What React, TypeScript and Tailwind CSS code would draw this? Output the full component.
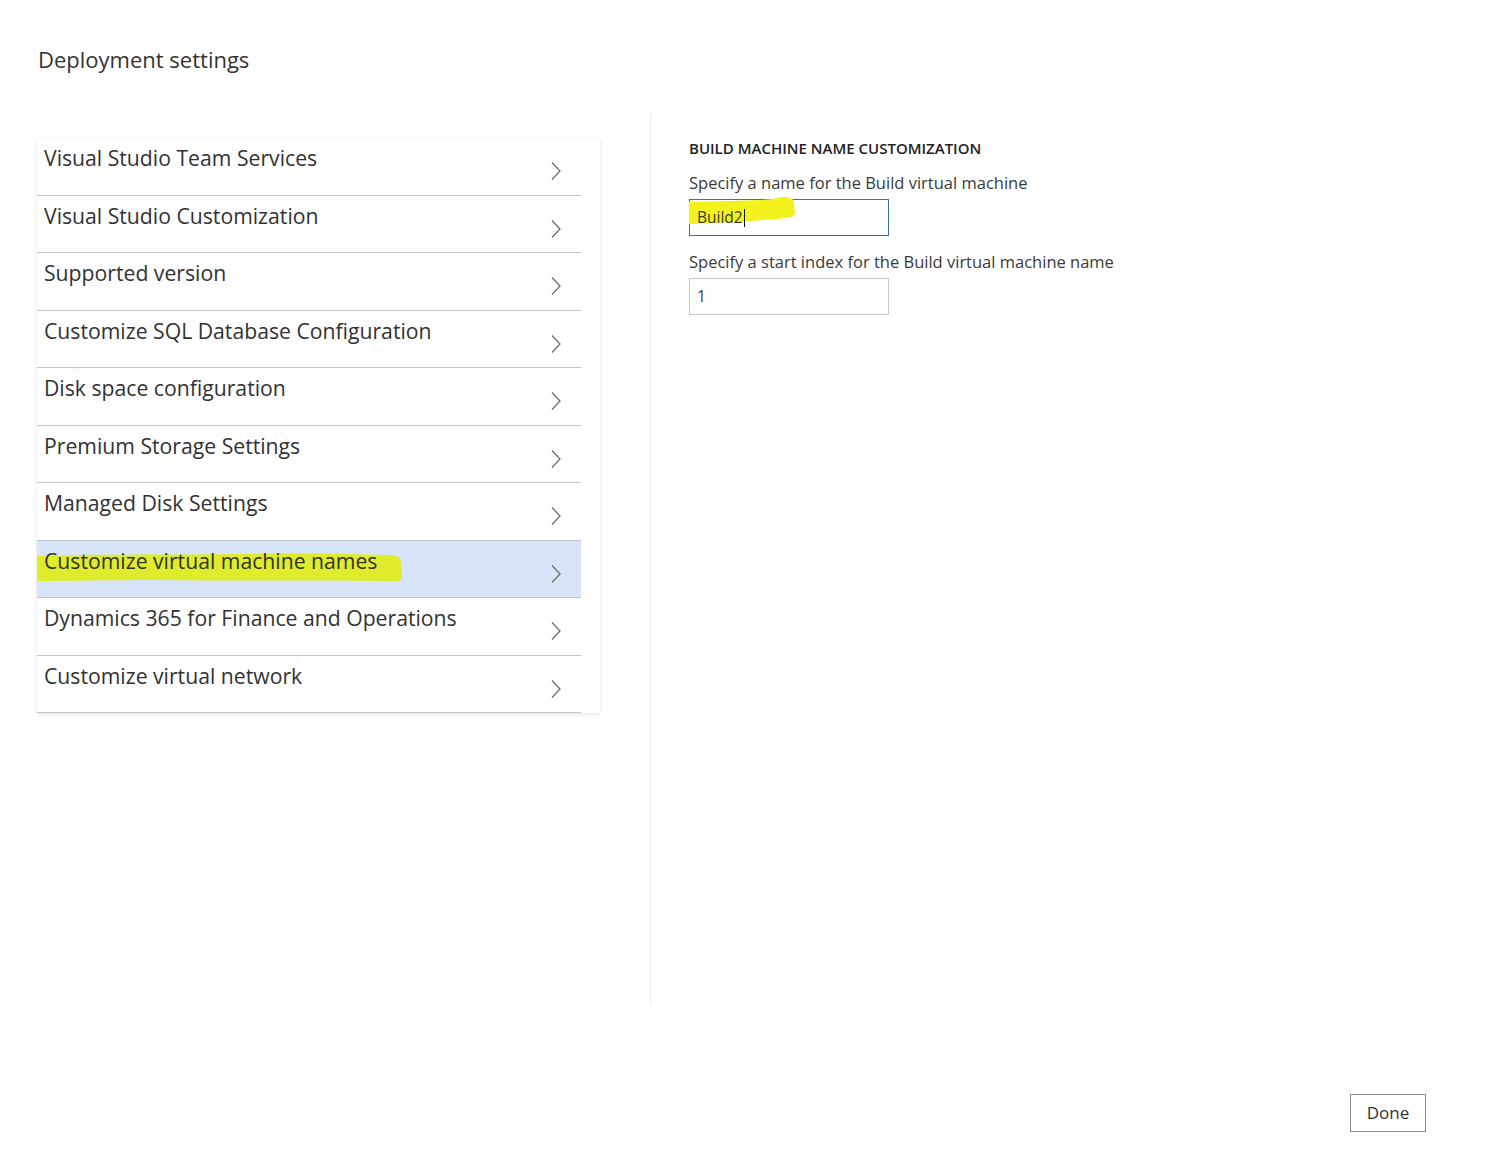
const items = [
  'Visual Studio Team Services',
  'Visual Studio Customization',
  'Supported version',
  'Customize SQL Database Configuration',
  'Disk space configuration',
  'Premium Storage Settings',
  'Managed Disk Settings',
  'Customize virtual machine names',
  'Dynamics 365 for Finance and Operations',
  'Customize virtual network',
];

const font = { fontFamily: '"Open Sans", "Noto Sans", sans-serif' };

function Chevron() {
  return (
    <svg width="12" height="20" viewBox="0 0 12 20" className="mt-[23px] text-[#6e6e6e]" fill="none">
      <path d="M2 1.5 L10 10 L2 18.5" stroke="currentColor" strokeWidth="1.3" />
    </svg>
  );
}

export default function App() {
  return (
    <div className="relative min-h-[1168px] w-full bg-white text-[#323232]" style={font}>
      {/* Title */}
      <h1 className="pl-[38px] pt-[44px] text-[22px] leading-[30px] text-[#333]">Deployment settings</h1>

      <div className="mt-[39px] flex h-[892px]">
        {/* Left list */}
        <div className="pl-[37px] pt-[25px]">
          <div className="w-[563px] bg-white pr-[19px] shadow-[0_1px_4px_rgba(0,0,0,0.12)]">
            {items.map((label, i) => {
              const active = i === 7;
              return (
                <div
                  key={label}
                  className={`relative flex h-[57.5px] items-start justify-between border-b border-[#c6c6c6] pl-[7px] pr-[19px] ${
                    active ? 'bg-[#d8e5f8]' : 'bg-white'
                  }`}
                >
                  {active && (
                    <svg className="pointer-events-none absolute left-0 top-[10px]" width="368" height="32" viewBox="0 0 368 32">
                      <path
                        d="M0 5 C60 3 120 4 200 3 C260 2 310 3 352 4 C360 4 364 6 364 12 L365 26 C365 30 360 31 350 30 C280 29 200 30 120 29 C70 29 30 30 0 30 Z"
                        fill="#dfec2c"
                      />
                    </svg>
                  )}
                  <span className="relative pt-[7px] text-[21.2px] leading-[26px] text-[#323232]">{label}</span>
                  <Chevron />
                </div>
              );
            })}
          </div>
        </div>

        {/* Divider */}
        <div className="ml-[50px] border-l border-[#ededed]" />

        {/* Right panel */}
        <div className="pl-[38px] pt-[25px] text-[#3a3a3a]">
          <div className="text-[15px] font-semibold leading-[20px] text-[#222]">BUILD MACHINE NAME CUSTOMIZATION</div>
          <div className="mt-[15px] text-[16.5px] leading-[20px]">Specify a name for the Build virtual machine</div>
          <div className="relative mt-[6px] flex h-[37px] w-[200px] items-center border border-[#3f6fa8] bg-white px-[7px] text-[15.5px]">
            <svg className="pointer-events-none absolute left-[-1px] top-[-4px]" width="108" height="30" viewBox="0 0 108 30">
              <path
                d="M0 6 C30 5 60 5 84 3 C92 0 104 0 105 6 L106 18 C104 22 96 22 88 23 C60 25 30 27 0 28 Z"
                fill="#f3f21c"
              />
            </svg>
            <span className="relative">Build2</span>
            <span className="relative ml-[1px] h-[18px] w-[1px] bg-[#111]" />
          </div>
          <div className="mt-[16px] text-[16.5px] leading-[20px]">Specify a start index for the Build virtual machine name</div>
          <div className="mt-[6px] flex h-[37px] w-[200px] items-center border border-[#c8c8c8] bg-white px-[7px] text-[15.5px]">
            1
          </div>
        </div>
      </div>

      {/* Footer */}
      <div className="mt-[89px] flex justify-end pr-[60px]">
        <button className="h-[38px] w-[76px] border border-[#8a8a8a] bg-white text-[17px] text-[#333]">Done</button>
      </div>
    </div>
  );
}
